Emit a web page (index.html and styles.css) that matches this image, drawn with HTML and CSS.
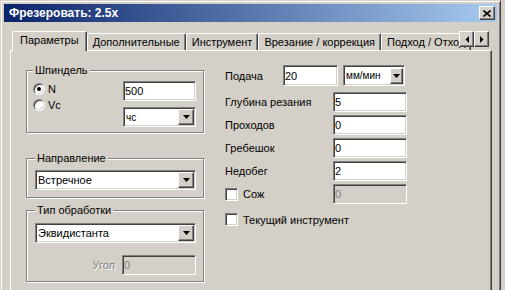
FILE: index.html
```html
<!DOCTYPE html>
<html lang="ru">
<head>
    <meta charset="UTF-8">
    <meta name="viewport" content="width=device-width, initial-scale=1.0">
    <title>Фрезеровать: 2.5х</title>
    <link rel="stylesheet" href="styles.css">
</head>
<body>

    <div class="okno">
        <div class="zagolovok">
            <span class="zagolovok-tekst">Фрезеровать: 2.5х</span>
            <button class="knopka zakryt">
                <svg width="8" height="7" viewBox="0 0 8 7"><path d="M0.5 0.5 L7.5 6.5 M7.5 0.5 L0.5 6.5" stroke="#000" stroke-width="1.6" fill="none"/></svg>
            </button>
        </div>

        <div class="vkladki">
            <div class="vkladka aktivna">Параметры</div>
            <div class="vkladka">Дополнительные</div>
            <div class="vkladka">Инструмент</div>
            <div class="vkladka">Врезание / коррекция</div>
            <div class="vkladka">Подход / Отход</div>
            <div class="strelki">
                <button class="knopka strelka">
                    <svg width="4" height="7" viewBox="0 0 4 7"><polygon points="4,0 4,7 0.5,3.5" fill="#000"/></svg>
                </button>
                <button class="knopka strelka">
                    <svg width="4" height="7" viewBox="0 0 4 7"><polygon points="0,0 0,7 3.5,3.5" fill="#000"/></svg>
                </button>
            </div>
        </div>

        <div class="panel">
            <div class="levo">
                <fieldset class="gruppa shpindel">
                    <legend>Шпиндель</legend>
                    <div class="shpindel-setka">
                        <div class="radio-spisok">
                            <div class="radio"><span class="krug vybran"></span>N</div>
                            <div class="radio"><span class="krug"></span>Vc</div>
                        </div>
                        <input type="text" class="pole" value="500">
                        <div class="spisok melkij">
                            <span class="spisok-tekst">чс</span>
                            <span class="knopka spisok-knopka"><svg width="7" height="4" viewBox="0 0 7 4"><polygon points="0,0 7,0 3.5,4" fill="#000"/></svg></span>
                        </div>
                    </div>
                </fieldset>

                <fieldset class="gruppa prostaya napravlenie">
                    <legend>Направление</legend>
                    <div class="spisok">
                        <span class="spisok-tekst">Встречное</span>
                        <span class="knopka spisok-knopka"><svg width="7" height="4" viewBox="0 0 7 4"><polygon points="0,0 7,0 3.5,4" fill="#000"/></svg></span>
                    </div>
                </fieldset>

                <fieldset class="gruppa prostaya obrabotka">
                    <legend>Тип обработки</legend>
                    <div class="spisok">
                        <span class="spisok-tekst">Эквидистанта</span>
                        <span class="knopka spisok-knopka"><svg width="7" height="4" viewBox="0 0 7 4"><polygon points="0,0 7,0 3.5,4" fill="#000"/></svg></span>
                    </div>
                    <div class="ugol">
                        <span class="otklyucheno">Угол</span>
                        <input type="text" class="pole" value="0" disabled>
                    </div>
                </fieldset>
            </div>

            <div class="pravo">
                <div class="ryad podacha">
                    <span>Подача</span>
                    <input type="text" class="pole" value="20">
                    <div class="spisok melkij">
                        <span class="spisok-tekst">мм/мин</span>
                        <span class="knopka spisok-knopka"><svg width="7" height="4" viewBox="0 0 7 4"><polygon points="0,0 7,0 3.5,4" fill="#000"/></svg></span>
                    </div>
                </div>
                <div class="ryad">
                    <span>Глубина резания</span>
                    <input type="text" class="pole" value="5">
                </div>
                <div class="ryad">
                    <span>Проходов</span>
                    <input type="text" class="pole" value="0">
                </div>
                <div class="ryad">
                    <span>Гребешок</span>
                    <input type="text" class="pole" value="0">
                </div>
                <div class="ryad">
                    <span>Недобег</span>
                    <input type="text" class="pole" value="2">
                </div>
                <div class="ryad">
                    <div class="flazhok"><span class="kvadrat"></span>Сож</div>
                    <input type="text" class="pole" value="0" disabled>
                </div>
                <div class="ryad tekushchij">
                    <div class="flazhok"><span class="kvadrat"></span>Текущий инструмент</div>
                </div>
            </div>
        </div>
    </div>

</body>
</html>
```

FILE: styles.css
```css
* {
    box-sizing: border-box;
}
body {
    margin: 0;
    background-color: #d4d0c8;
    font-family: 'Liberation Sans', Arial, sans-serif;
    font-size: 11px;
    color: #000;
    overflow: hidden;
}
.okno {
    width: 501px;
    height: 330px;
    padding: 3px;
    border: 1px solid;
    border-color: #d4d0c8 #404040 #404040 #d4d0c8;
    box-shadow: inset 1px 1px #fff, inset -1px -1px #808080;
}
.zagolovok {
    height: 18px;
    display: flex;
    align-items: center;
    justify-content: space-between;
    padding: 0 2px 0 5px;
    background: linear-gradient(to right, #0a246a, #a6caf0);
}
.zagolovok-tekst {
    color: #fff;
    font-weight: bold;
    font-size: 12px;
}
.knopka {
    display: flex;
    align-items: center;
    justify-content: center;
    padding: 0;
    border: 1px solid;
    border-color: #fff #404040 #404040 #fff;
    box-shadow: inset -1px -1px #808080;
    background-color: #d4d0c8;
}
.zakryt {
    width: 16px;
    height: 14px;
}

/* вкладки */
.vkladki {
    position: relative;
    z-index: 1;
    display: flex;
    align-items: flex-end;
    height: 20px;
    margin: 9px 5px 0 6px;
    padding-left: 2px;
    overflow: hidden;
}
.vkladka {
    flex-shrink: 0;
    height: 17px;
    margin-bottom: 1px;
    padding: 0 5px;
    border: 1px solid;
    border-bottom: none;
    border-color: #fff #404040 transparent #fff;
    border-radius: 2px 2px 0 0;
    box-shadow: inset -1px 0 #808080;
    background-color: #d4d0c8;
    line-height: 16px;
    white-space: nowrap;
}
.vkladka.aktivna {
    height: 20px;
    margin-bottom: 0;
    padding: 0 7px;
}
.strelki {
    position: absolute;
    top: 0;
    right: 3px;
    display: flex;
}
.strelka {
    width: 15px;
    height: 16px;
}

/* панель */
.panel {
    display: flex;
    gap: 21px;
    height: 260px;
    margin: -1px 5px 0 6px;
    padding: 13px 0 0 15px;
    border: 1px solid;
    border-color: #fff #404040 #404040 #fff;
    box-shadow: inset -1px -1px #808080;
}
.levo {
    width: 178px;
    display: flex;
    flex-direction: column;
}
.gruppa {
    margin: 0;
    min-width: 0;
    padding: 0 7px 0 6px;
    border: 1px solid #808080;
    box-shadow: inset 1px 1px #fff, 1px 1px #fff;
}
.gruppa legend {
    padding: 0 2px;
    line-height: 13px;
    background-color: #d4d0c8;
}
.shpindel-setka {
    display: grid;
    grid-template-columns: 1fr 73px;
    grid-template-rows: 20px 20px;
    row-gap: 6px;
    margin-top: 4px;
    padding-bottom: 5px;
}
.radio-spisok {
    grid-row: 1 / 3;
    display: flex;
    flex-direction: column;
}
.radio {
    display: flex;
    align-items: center;
    gap: 3px;
    height: 16px;
}
.krug {
    position: relative;
    width: 12px;
    height: 12px;
    border-radius: 50%;
    border: 1px solid;
    border-color: #808080 #fff #fff #808080;
    box-shadow: inset 1px 1px #404040, inset -1px -1px #d4d0c8;
    background-color: #fff;
}
.krug.vybran::after {
    content: '';
    position: absolute;
    left: 3px;
    top: 3px;
    width: 4px;
    height: 4px;
    border-radius: 50%;
    background-color: #000;
}
.prostaya {
    padding: 0 7px 0 8px;
}
.napravlenie {
    margin-top: 19px;
}
.napravlenie .spisok {
    margin: 5px 0 7px;
}
.obrabotka {
    margin-top: 6px;
}
.obrabotka .spisok {
    margin-top: 6px;
}
.ugol {
    display: flex;
    justify-content: flex-end;
    align-items: center;
    gap: 7px;
    margin: 12px 0 6px;
}
.ugol .pole {
    width: 74px;
}
.otklyucheno {
    color: #808080;
    text-shadow: 1px 1px #fff;
}

/* поля */
.pole {
    height: 20px;
    margin: 0;
    padding: 0 1px;
    border: 1px solid;
    border-color: #808080 #fff #fff #808080;
    box-shadow: inset 1px 1px #404040, inset -1px -1px #d4d0c8;
    background-color: #fff;
    font: inherit;
    color: #000;
    outline: none;
}
.pole:disabled {
    background-color: #d4d0c8;
    color: #808080;
}
.spisok {
    display: flex;
    align-items: center;
    height: 20px;
    padding: 1px;
    border: 1px solid;
    border-color: #808080 #fff #fff #808080;
    box-shadow: inset 1px 1px #404040, inset -1px -1px #d4d0c8;
    background-color: #fff;
}
.spisok-tekst {
    padding-left: 1px;
    white-space: nowrap;
}
.melkij .spisok-tekst {
    font-size: 10px;
}
.spisok-knopka {
    width: 16px;
    height: 16px;
    margin-left: auto;
}

/* правая колонка */
.pravo {
    width: 182px;
    display: flex;
    flex-direction: column;
    gap: 3px;
    padding-top: 1px;
}
.ryad {
    display: grid;
    grid-template-columns: 108px 74px;
    align-items: center;
    height: 20px;
}
.ryad.podacha {
    display: flex;
    height: 21px;
    margin-bottom: 3px;
}
.podacha span:first-child {
    width: 58px;
}
.podacha .pole {
    width: 55px;
    height: 21px;
}
.podacha .spisok {
    width: 62px;
    height: 21px;
    margin-left: 5px;
}
.ryad.tekushchij {
    display: flex;
    height: 17px;
    margin-top: 4px;
}
.flazhok {
    display: flex;
    align-items: center;
    gap: 5px;
    white-space: nowrap;
}
.kvadrat {
    width: 13px;
    height: 13px;
    border: 1px solid;
    border-color: #808080 #fff #fff #808080;
    box-shadow: inset 1px 1px #404040, inset -1px -1px #d4d0c8;
    background-color: #fff;
}
```
